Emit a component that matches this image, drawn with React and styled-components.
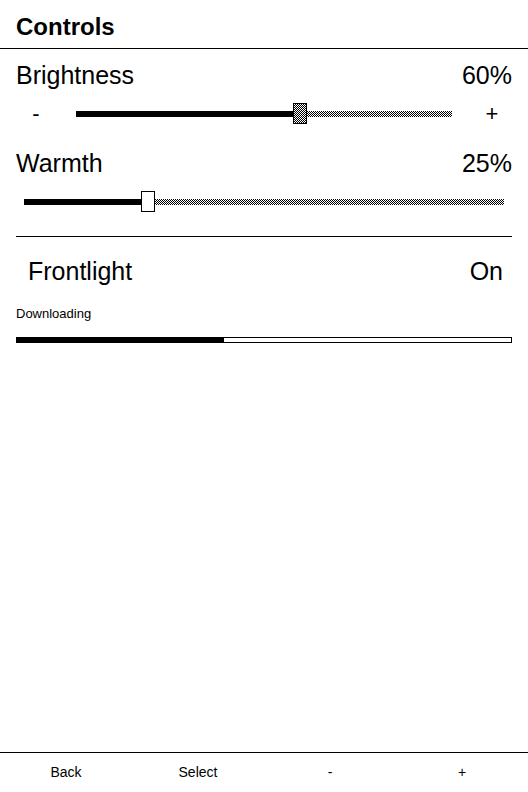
import React from 'react';
import styled, { createGlobalStyle } from 'styled-components';

const GlobalStyle = createGlobalStyle`
  html, body {
    margin: 0;
    padding: 0;
    background: #fff;
  }

  body {
    font-family: 'Liberation Sans', Arial, sans-serif;
    color: #000;
  }
`;

const Screen = styled.div`
  display: flex;
  flex-direction: column;
  width: 528px;
  height: 792px;
  background: #fff;
  overflow: hidden;
`;

const Header = styled.header`
  height: 42px;
  padding: 6px 16px 0;
  border-bottom: 1px solid #000;
`;

const Title = styled.h1`
  margin: 0;
  font-size: 24px;
  font-weight: bold;
  line-height: 42px;
`;

const Content = styled.main`
  display: flex;
  flex-direction: column;
  padding: 0 16px;
`;

const LabelRow = styled.div`
  display: flex;
  justify-content: space-between;
  align-items: center;
  height: 30px;
  margin-top: ${(props) => props.offset}px;
  padding: ${(props) => (props.inset ? '0 9px 0 12px' : '0')};
  font-size: 25px;
  line-height: 30px;
`;

const SliderRow = styled.div`
  display: flex;
  align-items: center;
  gap: 20px;
  height: 21px;
  margin-top: 13px;
  padding: ${(props) => (props.bare ? '0 8px' : '0')};
`;

const StepButton = styled.span`
  width: 40px;
  flex: none;
  text-align: center;
  font-size: 22px;
  line-height: 21px;
`;

const Track = styled.div`
  position: relative;
  flex: 1;
  height: 21px;
`;

const checker = `
  background-color: #fff;
  background-image: conic-gradient(#000 25%, #fff 0 50%, #000 0 75%, #fff 0);
  background-size: 2px 2px;
`;

const TrackRest = styled.div`
  position: absolute;
  left: 0;
  right: 0;
  top: 8px;
  height: 6px;
  ${checker}
`;

const TrackFill = styled.div`
  position: absolute;
  left: 0;
  top: 8px;
  height: 6px;
  background: #000;
`;

const Thumb = styled.div`
  position: absolute;
  top: 0;
  width: 12px;
  height: 19px;
  border: 1px solid #000;
  ${(props) => (props.focused ? checker : 'background: #fff;')}
`;

const Divider = styled.hr`
  margin: 24px 0 0;
  border: 0;
  border-top: 1px solid #000;
`;

const Caption = styled.div`
  margin-top: 20px;
  font-size: 13px;
  line-height: 16px;
`;

const Progress = styled.div`
  margin-top: 15px;
  height: 4px;
  border: 1px solid #000;
  background: #fff;
`;

const ProgressFill = styled.div`
  height: 100%;
  background: #000;
`;

const Footer = styled.footer`
  display: grid;
  grid-template-columns: repeat(4, 1fr);
  margin-top: auto;
  height: 39px;
  border-top: 1px solid #000;
`;

const FooterKey = styled.span`
  text-align: center;
  font-size: 14px;
  line-height: 39px;
`;

const THUMB_WIDTH = 14;

function Slider({ value, focused }) {
  // the thumb travels over the track minus its own width
  const offset = `calc(${value}% - ${(value * THUMB_WIDTH) / 100}px)`;

  return (
    <Track>
      <TrackRest />
      <TrackFill style={{ width: offset }} />
      <Thumb focused={focused} style={{ left: offset }} />
    </Track>
  );
}

export default function App() {
  const brightness = 60;
  const warmth = 25;
  const download = 42;

  return (
    <Screen>
      <GlobalStyle />
      <Header>
        <Title>Controls</Title>
      </Header>

      <Content>
        <LabelRow offset={11}>
          <span>Brightness</span>
          <span>{brightness}%</span>
        </LabelRow>
        <SliderRow>
          <StepButton>-</StepButton>
          <Slider value={brightness} focused />
          <StepButton>+</StepButton>
        </SliderRow>

        <LabelRow offset={24}>
          <span>Warmth</span>
          <span>{warmth}%</span>
        </LabelRow>
        <SliderRow bare>
          <Slider value={warmth} />
        </SliderRow>

        <Divider />

        <LabelRow offset={19} inset>
          <span>Frontlight</span>
          <span>On</span>
        </LabelRow>

        <Caption>Downloading</Caption>
        <Progress>
          <ProgressFill style={{ width: `${download}%` }} />
        </Progress>
      </Content>

      <Footer>
        <FooterKey>Back</FooterKey>
        <FooterKey>Select</FooterKey>
        <FooterKey>-</FooterKey>
        <FooterKey>+</FooterKey>
      </Footer>
    </Screen>
  );
}
